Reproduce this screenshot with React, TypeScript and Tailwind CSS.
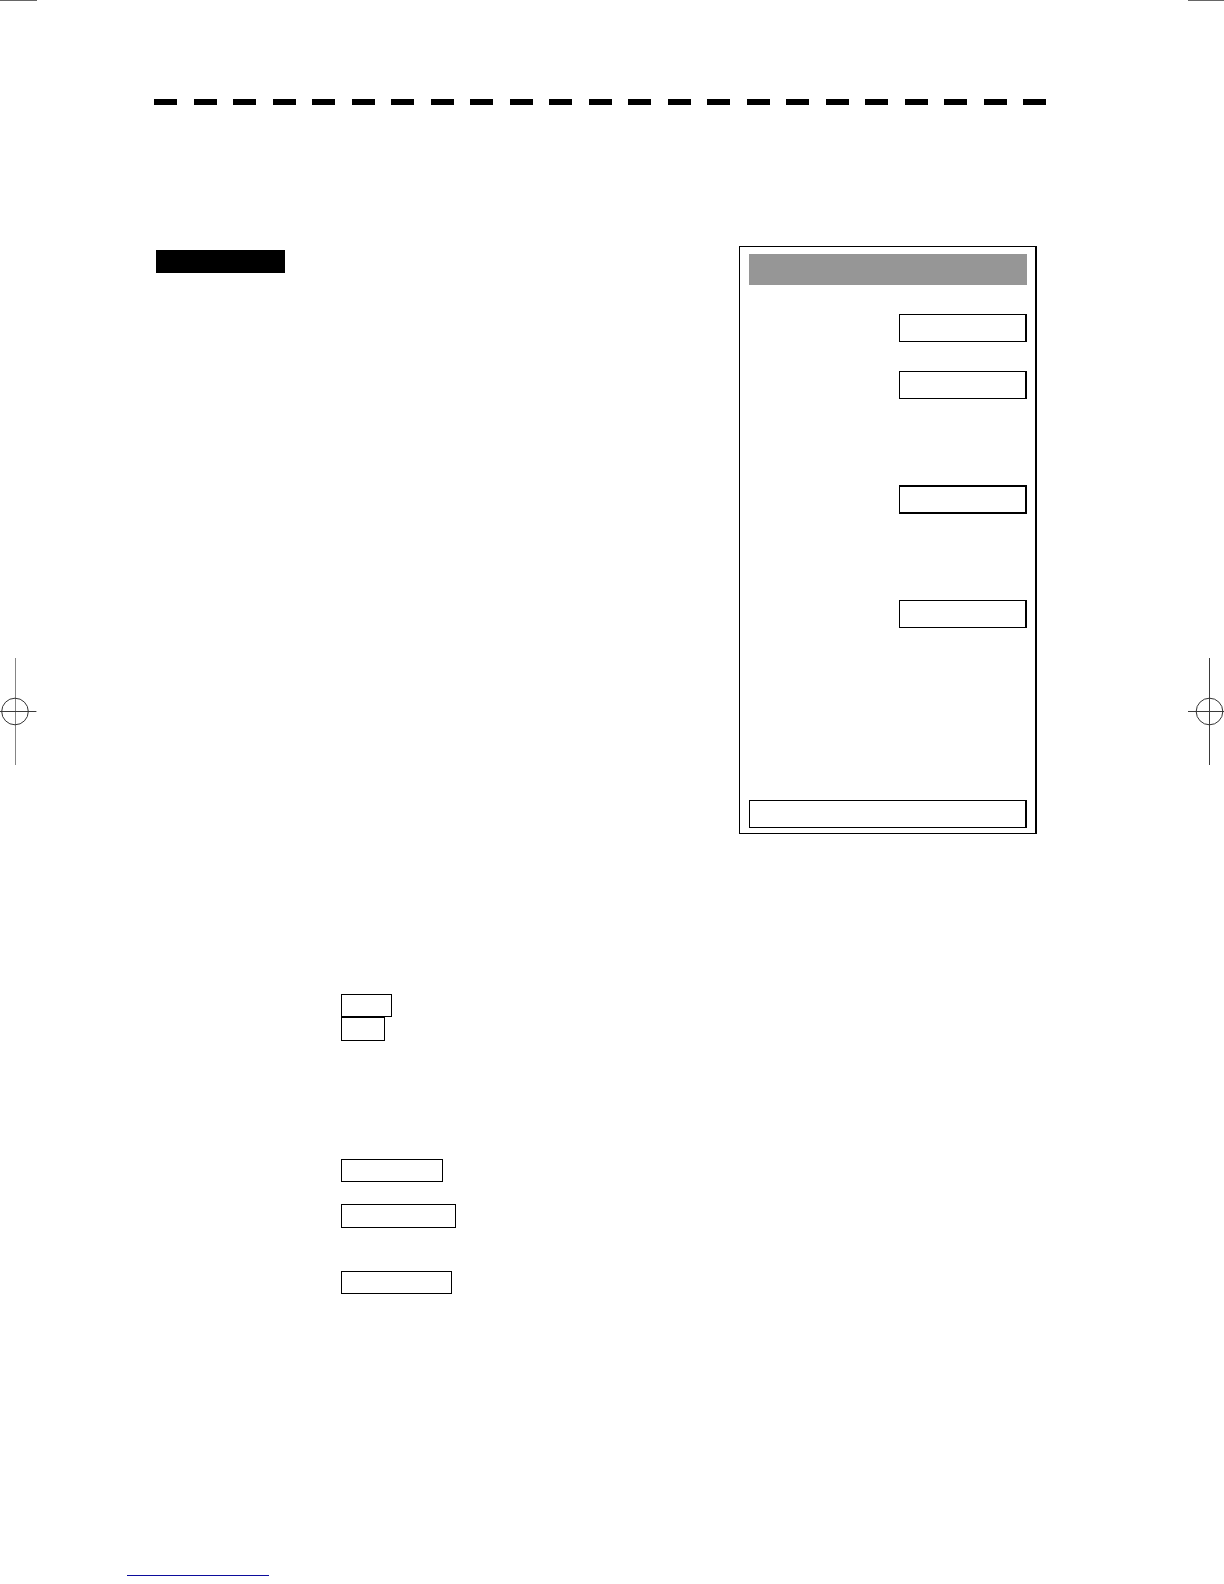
import React from 'react';

const dashes = Array.from({ length: 23 });

const fields = [
  { id: 'field-1', label: 'Field 1', className: 'mt-[29px] h-7 border-y' },
  { id: 'field-2', label: 'Field 2', className: 'mt-[29px] h-7 border-y' },
  { id: 'field-3', label: 'Field 3', className: 'mt-[86px] h-[29px] border-y-2' },
  { id: 'field-4', label: 'Field 4', className: 'mt-[86px] h-7 border-y' },
];

const keys = [
  'h-[23px] w-[51px]',
  'h-6 w-11',
  'mt-[118px] h-[23px] w-[102px]',
  'mt-[22px] h-6 w-[115px]',
  'mt-[43px] h-[23px] w-[111px]',
];

const CropMarks = () => (
  <div className="flex justify-between">
    <div className="h-px w-[37px] bg-[#666666]" />
    <div className="h-px w-9 bg-[#666666]" />
  </div>
);

const LeftMark = () => (
  <svg className="mt-[657px] h-[107px] w-[37px] shrink-0" viewBox="0 0 37 107" fill="none" aria-hidden="true">
    <path d="M15.5 0V107" stroke="#858585" />
    <path d="M0 53.5H36.4" stroke="#3a3a3a" />
    <circle cx="15" cy="53.5" r="13.3" stroke="#333333" />
  </svg>
);

const RightMark = () => (
  <svg className="mt-[657px] h-[107px] w-9 shrink-0" viewBox="0 0 36 107" fill="none" aria-hidden="true">
    <path d="M21.5 0V107" stroke="#3a3a3a" />
    <path d="M0 53.5H36" stroke="#3a3a3a" />
    <circle cx="21.5" cy="53.5" r="13.3" stroke="#333333" />
  </svg>
);

const DashedRule = () => (
  <div className="flex justify-between">
    {dashes.map((_, i) => (
      <div key={i} className="h-1.5 w-[23px] bg-black" />
    ))}
  </div>
);

const Panel = () => (
  <div className="mr-[9px] flex w-[298px] flex-col border border-r-2 border-black pt-[7px] pr-2 pb-[5px] pl-[9px]">
    <div className="h-[31px] bg-[#969696]" />
    {fields.map((field) => (
      <input
        key={field.id}
        id={field.id}
        type="text"
        aria-label={field.label}
        className={`w-32 self-end border-r-2 border-l border-black px-2 text-sm ${field.className}`}
      />
    ))}
    <button type="button" aria-label="Panel action" className="mt-[172px] h-7 border border-r-2 border-black" />
  </div>
);

const App = () => {
  return (
    <div className="min-h-screen bg-white pb-2 font-['Liberation_Sans',sans-serif] text-black">
      <CropMarks />
      <div className="flex items-start">
        <LeftMark />
        <main className="flex-1 pt-[98px] pr-[142px] pl-[117px]">
          <DashedRule />
          <div className="mt-[141px] flex items-start justify-between pl-0.5">
            <div className="mt-1 h-[23px] w-[129px] bg-black" />
            <Panel />
          </div>
          <div className="mt-40 pl-[187px]">
            {keys.map((size, i) => (
              <div key={i} className={`border border-black ${size}`} />
            ))}
          </div>
        </main>
        <RightMark />
      </div>
      <footer className="mt-[261px] pl-[127px]">
        <a href="#" aria-label="Page link" className="block h-[21px] w-[142px] border-b border-[#0c0c9c]" />
      </footer>
    </div>
  );
};

export default App;
